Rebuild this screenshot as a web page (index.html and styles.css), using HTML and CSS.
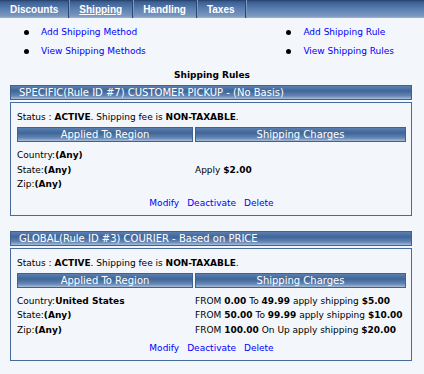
FILE: index.html
```html
<!DOCTYPE html>
<html lang="en">
<head>
    <meta charset="UTF-8">
    <title>Shipping Rules</title>
    <link rel="stylesheet" href="styles.css">
</head>
<body>
    <div class="tabs">
        <a class="tab">Discounts</a>
        <a class="tab active">Shipping</a>
        <a class="tab">Handling</a>
        <a class="tab">Taxes</a>
    </div>

    <div class="menu">
        <ul>
            <li><a href="#">Add Shipping Method</a></li>
            <li><a href="#">View Shipping Methods</a></li>
        </ul>
        <ul>
            <li><a href="#">Add Shipping Rule</a></li>
            <li><a href="#">View Shipping Rules</a></li>
        </ul>
    </div>

    <h2>Shipping Rules</h2>

    <!-- rule 7 -->
    <div class="rule">
        <div class="bar">SPECIFIC(Rule ID #7) CUSTOMER PICKUP - (No Basis)</div>
        <div class="box">
            <div class="status">Status : <b>ACTIVE</b>. Shipping fee is <b>NON-TAXABLE</b>.</div>
            <div class="grid">
                <div class="head">Applied To Region</div>
                <div class="head">Shipping Charges</div>
                <div class="cell">Country:<b>(Any)</b></div>
                <div class="cell"></div>
                <div class="cell">State:<b>(Any)</b></div>
                <div class="cell">Apply <b>$2.00</b></div>
                <div class="cell">Zip:<b>(Any)</b></div>
                <div class="cell"></div>
            </div>
            <div class="actions">
                <a href="#">Modify</a>
                <a href="#">Deactivate</a>
                <a href="#">Delete</a>
            </div>
        </div>
    </div>

    <!-- rule 3 -->
    <div class="rule">
        <div class="bar">GLOBAL(Rule ID #3) COURIER - Based on PRICE</div>
        <div class="box">
            <div class="status">Status : <b>ACTIVE</b>. Shipping fee is <b>NON-TAXABLE</b>.</div>
            <div class="grid">
                <div class="head">Applied To Region</div>
                <div class="head">Shipping Charges</div>
                <div class="cell">Country:<b>United States</b></div>
                <div class="cell">FROM <b>0.00</b> To <b>49.99</b> apply shipping <b>$5.00</b></div>
                <div class="cell">State:<b>(Any)</b></div>
                <div class="cell">FROM <b>50.00</b> To <b>99.99</b> apply shipping <b>$10.00</b></div>
                <div class="cell">Zip:<b>(Any)</b></div>
                <div class="cell">FROM <b>100.00</b> On Up apply shipping <b>$20.00</b></div>
            </div>
            <div class="actions">
                <a href="#">Modify</a>
                <a href="#">Deactivate</a>
                <a href="#">Delete</a>
            </div>
        </div>
    </div>
</body>
</html>
```

FILE: styles.css
```css
body {
    margin: 0;
    background: #f3f6fa;
    font-family: "DejaVu Sans", Verdana, sans-serif;
    font-size: 9px;
    color: #000;
}
a {
    color: #0000ff;
    text-decoration: none;
}
.tabs {
    display: flex;
    height: 18px;
    background: linear-gradient(#243f6a 0, #3c5f92 2px, #5a7fb1 9px, #7b98c0 16px, #9fb4d2 18px);
}
.tab {
    display: flex;
    align-items: center;
    padding: 0 10px;
    color: #fff;
    font-family: "Liberation Sans", Arial, sans-serif;
    font-weight: bold;
    font-size: 10px;
    border-right: 1px solid #2b4670;
    box-shadow: 1px 0 0 #7d99c2;
}
.tab.active {
    text-decoration: underline;
}
.menu {
    display: flex;
    justify-content: space-between;
    padding: 9px 30px 0 24px;
}
.menu ul {
    margin: 0;
    padding: 0;
    list-style: none;
}
.menu li {
    position: relative;
    padding-left: 17px;
    height: 19px;
}
.menu li::before {
    content: "";
    position: absolute;
    left: 0;
    top: 3px;
    width: 5px;
    height: 5px;
    border-radius: 50%;
    background: #000;
}
h2 {
    margin: 3px 0 0;
    text-align: center;
    font-size: 9px;
    line-height: 14px;
}
.rule {
    margin: 3px 12px 15px 10px;
}
.bar {
    height: 13px;
    line-height: 13px;
    padding-left: 8px;
    border: 1px solid #3e6294;
    color: #fff;
    font-size: 10px;
    background: linear-gradient(#5b7fb0 0, #3f6599 5px, #6687b5 10px, #a8bdd8 13px);
}
.box {
    margin-top: 2px;
    border: 1px solid #466a9b;
    padding: 8px 5px 5px 6px;
}
.status {
    line-height: 13px;
}
.grid {
    display: grid;
    grid-template-columns: 176px 1fr;
    column-gap: 2px;
    margin-top: 3px;
}
.head {
    height: 13px;
    line-height: 13px;
    text-align: center;
    color: #fff;
    font-size: 10px;
    border: 1px solid #3e6294;
    background: linear-gradient(#5b7fb0 0, #3f6599 5px, #6687b5 10px, #a8bdd8 13px);
    margin-bottom: 6px;
}
.cell {
    line-height: 14.5px;
}
.actions {
    display: flex;
    justify-content: center;
    gap: 8px;
    margin-top: 5px;
    line-height: 13px;
}
```
